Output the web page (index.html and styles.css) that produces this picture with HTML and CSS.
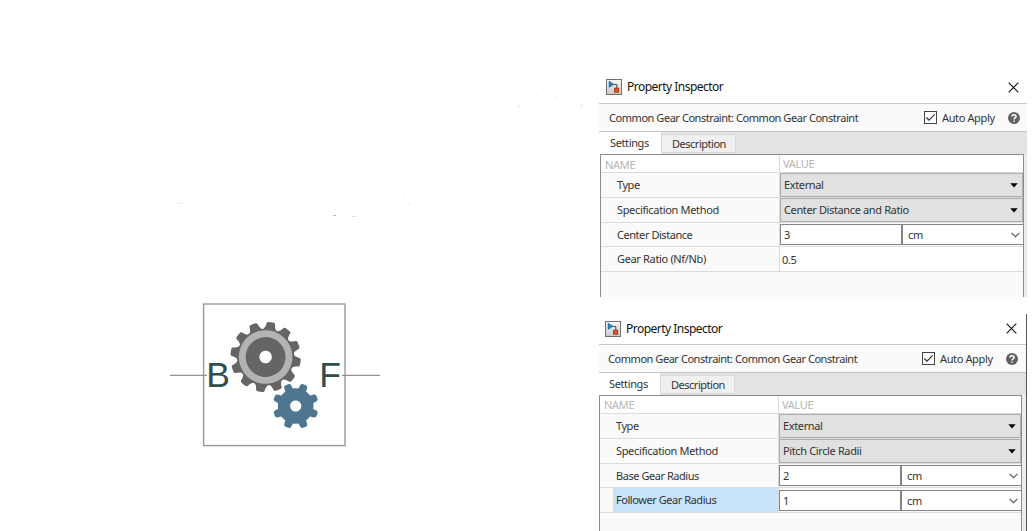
FILE: index.html
```html
<!DOCTYPE html>
<html lang="en">
<head>
<meta charset="utf-8">
<title>Common Gear Constraint</title>
<link rel="stylesheet" href="styles.css">
</head>
<body>
<svg class="symbols" width="0" height="0" aria-hidden="true">
  <symbol id="app" viewBox="0 0 16 16">
    <linearGradient id="appbg" x2="0" y2="1"><stop stop-color="#f8f8f8"/><stop offset="1" stop-color="#c9c9c9"/></linearGradient>
    <rect x=".5" y=".5" width="15" height="15" fill="url(#appbg)" stroke="#6f6f6f"/>
    <path d="M3 2.2L8.2 5.3L3 8.4z" fill="#2383b9" stroke="#17638f" stroke-width=".5"/>
    <path d="M8.3 5.5H10.8V9" fill="none" stroke="#444"/>
    <rect x="8.6" y="9.2" width="4" height="4" fill="#d9532b" stroke="#a83c18"/>
  </symbol>
  <symbol id="close" viewBox="0 0 11 11"><path d="M.7.7L10.3 10.3M10.3.7L.7 10.3" stroke="#111" stroke-width="1.1"/></symbol>
  <symbol id="check" viewBox="0 0 13 13"><rect x=".5" y=".5" width="12" height="12" fill="#fff" stroke="#444"/><path d="M2.3 6.5L5 9.2L10.7 3.4" fill="none" stroke="#333" stroke-width="1.2"/></symbol>
  <symbol id="help" viewBox="0 0 12 12"><circle cx="6" cy="6" r="6" fill="#626262"/><path d="M4 4.6C4 2.2 8 2.2 8 4.5C8 5.9 6.1 5.9 6.1 7.4M6.1 8.4V9.8" fill="none" stroke="#fff" stroke-width="1.5"/></symbol>
  <symbol id="tri" viewBox="0 0 8 5"><path d="M.3.3H7.7L4 4.6z" fill="#000"/></symbol>
  <symbol id="chev" viewBox="0 0 9 6"><path d="M.6.8L4.5 4.7L8.4.8" fill="none" stroke="#555" stroke-width="1.1"/></symbol>
</svg>
<main class="page">
  <svg class="diagram" width="599" height="531" viewBox="0 0 599 531">
    <g fill="#ddd">
      <rect x="177" y="203" width="6" height="1" fill="#eee"/><rect x="333" y="215" width="3" height="1" fill="#bbb"/><rect x="352" y="216" width="4" height="1"/>
      <rect x="403" y="195" width="1" height="1"/><rect x="408" y="203" width="1" height="1"/><rect x="518" y="75" width="1" height="1"/>
      <rect x="542" y="88" width="1" height="1"/><rect x="518" y="106" width="2" height="1"/><rect x="530" y="104" width="1" height="1"/>
      <rect x="556" y="96" width="1" height="1"/><rect x="569" y="92" width="1" height="1"/><rect x="581" y="105" width="1" height="2"/>
    </g>
    <rect x="203.6" y="304" width="141.4" height="141.6" fill="#fff" stroke="#999" stroke-width="1.4"/>
    <path d="M170 375.4H207M342 375.4H380" stroke="#929292" stroke-width="1.4"/>
    <text class="port" x="206.3" y="387.3">B</text>
    <text class="port" x="319.3" y="387.3">F</text>
    <defs>
      <path id="tooth" d="M-6.2 -28C-5 -29.5 -4.7 -31 -4.3 -33.7Q-4 -35 -2.8 -35.1Q0 -35.4 2.8 -35.1Q4 -35 4.3 -33.7C4.7 -31 5 -29.5 6.2 -28L5 -25H-5z"/>
      <path id="tooth8" d="M-4.2 -16.5L-3.7 -21.2Q-3.4 -22.7 -2.2 -22.9Q0 -23.3 2.2 -22.9Q3.4 -22.7 3.7 -21.2L4.2 -16.5L4 -14H-4z"/>
    </defs>
    <g transform="translate(265.6 357) rotate(9)" fill="#656565">
      <circle r="28.6"/>
      <use href="#tooth"/><use href="#tooth" transform="rotate(30)"/><use href="#tooth" transform="rotate(60)"/><use href="#tooth" transform="rotate(90)"/><use href="#tooth" transform="rotate(120)"/><use href="#tooth" transform="rotate(150)"/><use href="#tooth" transform="rotate(180)"/><use href="#tooth" transform="rotate(210)"/><use href="#tooth" transform="rotate(240)"/><use href="#tooth" transform="rotate(270)"/><use href="#tooth" transform="rotate(300)"/><use href="#tooth" transform="rotate(330)"/>
      <circle r="26.8" fill="#b3b3b3"/><circle r="19.9"/><circle r="6.3" fill="#fff"/>
    </g>
    <g transform="translate(295.7 406) rotate(22.5)" fill="#4e7690">
      <circle r="17.8"/>
      <use href="#tooth8"/><use href="#tooth8" transform="rotate(45)"/><use href="#tooth8" transform="rotate(90)"/><use href="#tooth8" transform="rotate(135)"/><use href="#tooth8" transform="rotate(180)"/><use href="#tooth8" transform="rotate(225)"/><use href="#tooth8" transform="rotate(270)"/><use href="#tooth8" transform="rotate(315)"/>
      <circle r="5.6" fill="#fff"/>
    </g>
  </svg>
  <div class="column">
    <section class="panel first">
      <header class="title"><svg class="app"><use href="#app"/></svg><span>Property Inspector</span><svg class="close"><use href="#close"/></svg></header>
      <div class="block"><span class="blockname">Common Gear Constraint: Common Gear Constraint</span><svg class="check"><use href="#check"/></svg><span class="auto">Auto Apply</span><svg class="help"><use href="#help"/></svg></div>
      <nav class="tabs"><span class="tab active">Settings</span><span class="tab other">Description</span></nav>
      <div class="table">
        <div class="row head"><span class="name">NAME</span><span class="value">VALUE</span></div>
        <div class="row"><span class="name">Type</span><div class="value"><div class="select"><span>External</span><svg class="tri"><use href="#tri"/></svg></div></div></div>
        <div class="row"><span class="name spec">Specification Method</span><div class="value"><div class="select"><span>Center Distance and Ratio</span><svg class="tri"><use href="#tri"/></svg></div></div></div>
        <div class="row"><span class="name">Center Distance</span><div class="value"><div class="input">3</div><div class="unit"><span>cm</span><svg class="chev"><use href="#chev"/></svg></div></div></div>
        <div class="row"><span class="name spec">Gear Ratio (Nf/Nb)</span><div class="value plain">0.5</div></div>
      </div>
    </section>
    <section class="panel second">
      <header class="title"><svg class="app"><use href="#app"/></svg><span>Property Inspector</span><svg class="close"><use href="#close"/></svg></header>
      <div class="block"><span class="blockname">Common Gear Constraint: Common Gear Constraint</span><svg class="check"><use href="#check"/></svg><span class="auto">Auto Apply</span><svg class="help"><use href="#help"/></svg></div>
      <nav class="tabs"><span class="tab active">Settings</span><span class="tab other">Description</span></nav>
      <div class="table">
        <div class="row head"><span class="name">NAME</span><span class="value">VALUE</span></div>
        <div class="row"><span class="name">Type</span><div class="value"><div class="select"><span>External</span><svg class="tri"><use href="#tri"/></svg></div></div></div>
        <div class="row"><span class="name spec">Specification Method</span><div class="value"><div class="select"><span>Pitch Circle Radii</span><svg class="tri"><use href="#tri"/></svg></div></div></div>
        <div class="row"><span class="name">Base Gear Radius</span><div class="value"><div class="input">2</div><div class="unit"><span>cm</span><svg class="chev"><use href="#chev"/></svg></div></div></div>
        <div class="row"><span class="name selected">Follower Gear Radius</span><div class="value"><div class="input">1</div><div class="unit"><span>cm</span><svg class="chev"><use href="#chev"/></svg></div></div></div>
      </div>
    </section>
  </div>
</main>
</body>
</html>
```
FILE: styles.css
```css
* { box-sizing: border-box; }
body { margin: 0; background: #fff; overflow: hidden; font: 11px/16px "Noto Sans", "Open Sans", sans-serif; letter-spacing: -0.37px; color: #333; white-space: nowrap; }
svg { display: block; flex: none; }
.symbols { position: absolute; }
.page { display: flex; width: 1032px; height: 531px; }
.port { font: 35.5px "Liberation Sans", Arial, sans-serif; letter-spacing: 0; fill: #2f4f4f; }
.column { display: flex; flex-direction: column; width: 433px; padding-top: 70px; }
.panel { display: flex; flex-direction: column; width: 428px; }
.first { height: 227px; }
.second { height: 217px; margin-top: 17px; border-right: 1px solid #555; }
.title { display: flex; align-items: center; height: 33px; padding: 1px 8px 0 7px; font-size: 12px; letter-spacing: -0.52px; color: #111; }
.second .title { height: 30px; padding: 0 9px 1px 6px; }
.app { width: 16px; height: 16px; margin-right: 5px; }
.close { width: 11px; height: 11px; margin-left: auto; }
.block { display: flex; align-items: center; height: 29px; padding: 0 7px 0 10px; border-top: 1px solid #c9c9c9; border-bottom: 1px solid #c6c6c6; background: #fafafa; }
.blockname { letter-spacing: -0.45px; }
.second .block { padding: 0 8px 0 9px; }
.check { width: 13px; height: 13px; margin-left: auto; margin-right: 5px; }
.auto { width: 66px; }
.help { width: 12px; height: 12px; }
.tabs { display: flex; height: 22px; background: #e3e3e3; }
.tab { height: 22px; line-height: 21px; }
.active { width: 62px; padding-left: 11px; background: #fff; }
.other { width: 75px; height: 19px; margin-top: 2px; padding-left: 10px; border: 1px solid #d9d9d9; background: #f0f0f0; line-height: 18px; letter-spacing: -0.48px; }
.second .active { padding-left: 10px; width: 61px; }
.table { flex: 1; width: 424px; margin-left: 1px; border: 1px solid #8a8c94; border-width: 1px 1px 0; background: #fafafa; }
.first .table { box-shadow: 3px 0 #ececec; }
.second .table { width: 423px; margin-left: 0; box-shadow: 4px 0 #ececec; }
.row { display: flex; height: 24.8px; border-bottom: 1px solid #dcdcdc; }
.head { height: 18px; background: #fff; color: #b5b5b5; line-height: 19px; }
.name { width: 179px; padding-left: 16px; border-right: 1px solid #dcdcdc; line-height: 24px; letter-spacing: -0.45px; }
.spec { letter-spacing: -0.34px; }
.head .name { padding-left: 4px; line-height: 19px; letter-spacing: -0.3px; }
.second .name { line-height: 23px; }
.second .head .name { line-height: 18px; }
.value { display: flex; flex: 1; align-items: center; }
.head .value { padding-left: 3px; }
.second .name.selected { margin-left: 13px; width: 166px; padding-left: 3px; background: #c9e3fa; }
.select { display: flex; align-items: center; width: 100%; height: 100%; padding: 1px 4px 0 3px; border: 1px solid #adadad; background: #e1e1e1; }
.tri { width: 8px; height: 5px; margin-left: auto; }
.input { width: 122px; height: 21px; padding-left: 3px; border: 1px solid #858585; background: #fff; line-height: 20px; }
.unit { display: flex; flex: 1; align-items: center; height: 21px; padding: 1px 3px 0 5px; border: 1px solid #858585; border-right: 0; background: #fff; }
.chev { width: 9px; height: 6px; margin-left: auto; }
.plain { padding: 1px 0 0 2px; background: #fff; }
```
